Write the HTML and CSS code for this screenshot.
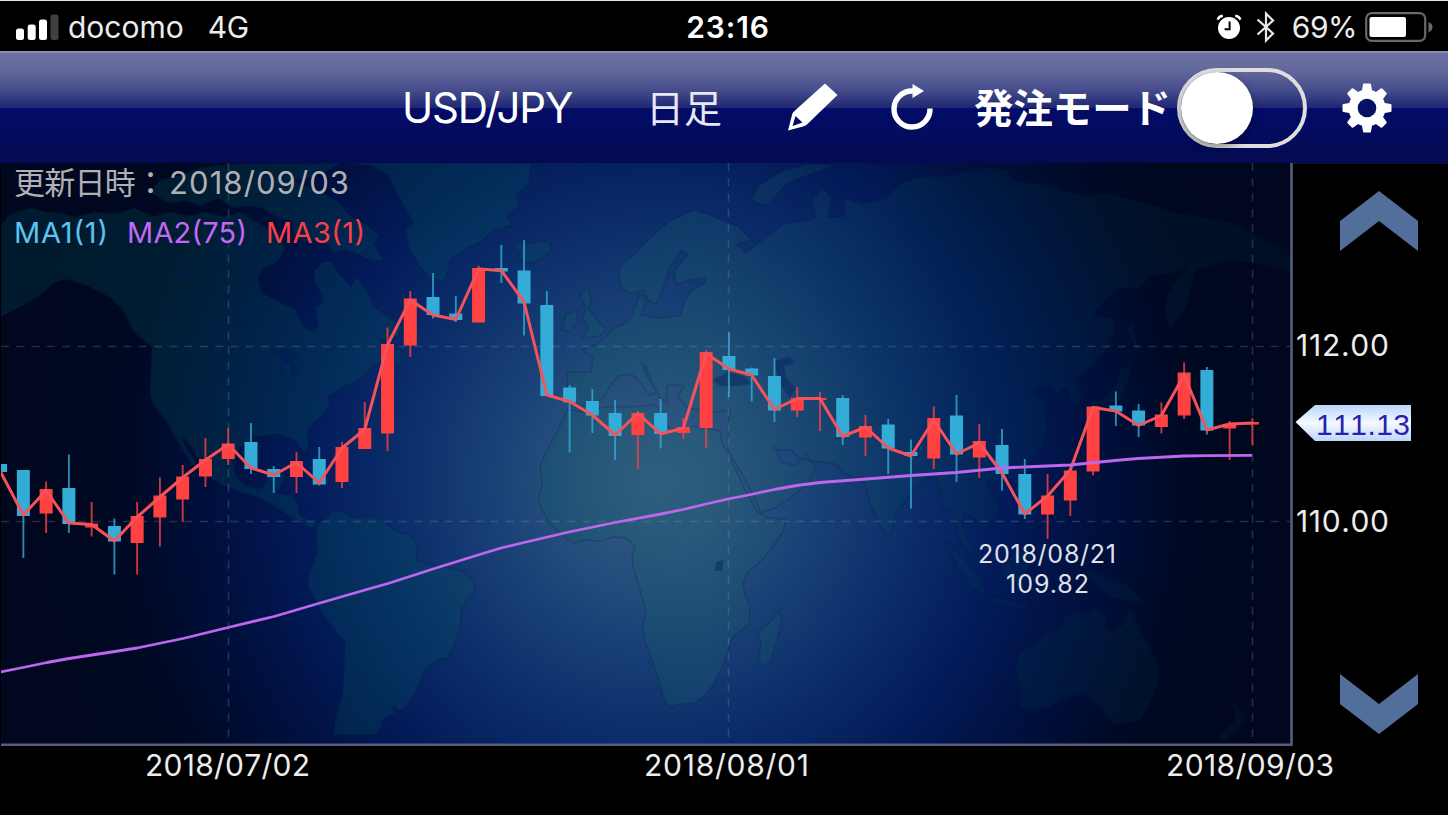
FILE: index.html
```html
<!DOCTYPE html>
<html lang="ja">
<head>
    <meta charset="UTF-8">
    <meta name="viewport" content="width=device-width, initial-scale=1.0">
    <title>USD/JPY チャート</title>
    <link rel="stylesheet" href="styles.css">
</head>
<body>
    <div class="screen">
        <!-- Status bar -->
        <div class="status-bar">
            <div class="status-left">
                <svg class="signal" width="44" height="28" viewBox="0 0 44 28">
                    <rect x="0" y="15.5" width="8" height="11.5" rx="2.5" fill="#fff"/>
                    <rect x="11.7" y="11.5" width="8" height="15.5" rx="2.5" fill="#fff"/>
                    <rect x="23" y="6.5" width="8" height="20.5" rx="2.5" fill="#fff"/>
                    <rect x="34.5" y="1.5" width="8" height="25.5" rx="2.5" fill="#404040"/>
                </svg>
                <span class="carrier">docomo</span>
                <span class="network">4G</span>
            </div>
            <div class="status-time">23:16</div>
            <div class="status-right">
                <svg class="alarm" width="26" height="26" viewBox="0 0 26 26">
                    <circle cx="13" cy="14" r="11" fill="#fff"/>
                    <path d="M1.6 5.6Q3 2.2 6.8 1.8M24.4 5.6Q23 2.2 19.2 1.8" fill="none" stroke="#fff" stroke-width="2.4"/>
                    <path d="M13.6 7.5V15.2H8.6" fill="none" stroke="#000" stroke-width="2"/>
                </svg>
                <svg class="bluetooth" width="20" height="32" viewBox="0 0 20 32">
                    <path d="M1.5 8.5L17 22.5 10 29.5V2.5L17 9.5 1.5 23.5" fill="none" stroke="#e8e8e8" stroke-width="2.2"/>
                </svg>
                <span class="battery-text">69%</span>
                <svg class="battery" width="68" height="30" viewBox="0 0 68 30">
                    <rect x="1.2" y="1.2" width="59" height="27.6" rx="5.5" fill="none" stroke="#696969" stroke-width="2.2"/>
                    <rect x="4.5" y="5" width="36.5" height="20" rx="2" fill="#fff"/>
                    <path d="M63.5 10Q67.5 11.5 67.5 15T63.5 20.5Z" fill="#696969"/>
                </svg>
            </div>
        </div>

        <!-- Toolbar -->
        <div class="toolbar">
            <div class="pair">USD/JPY</div>
            <div class="period">日足</div>
            <svg class="icon-pencil" width="52" height="50" viewBox="0 0 52 50">
                <path fill="#fff" fill-rule="evenodd" d="M38 .5L50.500 12 21 40.500Q19.500 42.500 16 43.500L1 47.500 5 32Q5.500 29.500 8 27.500ZM8.500 33L15.500 39.500 5.500 43Z"/>
            </svg>
            <svg class="icon-reload" width="44" height="48" viewBox="0 0 44 48">
                <path d="M39 24.500A18 18 0 1 1 22 7" fill="none" stroke="#fff" stroke-width="5.400"/>
                <path d="M21.500 0L33 7 21.500 14Z" fill="#fff"/>
            </svg>
            <div class="order-label">発注モード</div>
            <div class="toggle"><div class="knob"></div></div>
            <svg class="icon-gear" width="50" height="50" viewBox="-25 -25 50 50">
                <g fill="#fff">
                    <path id="tooth" d="M-4 -23.500Q-4 -24.500 -3 -24.500H3Q4 -24.500 4 -23.500L5.500 -15H-5.500Z"/>
                    <use href="#tooth" transform="rotate(45)"/>
                    <use href="#tooth" transform="rotate(90)"/>
                    <use href="#tooth" transform="rotate(135)"/>
                    <use href="#tooth" transform="rotate(180)"/>
                    <use href="#tooth" transform="rotate(225)"/>
                    <use href="#tooth" transform="rotate(270)"/>
                    <use href="#tooth" transform="rotate(315)"/>
                    <circle r="18.500"/>
                </g>
                <circle r="9.300" fill="#081063"/>
            </svg>
        </div>

        <!-- Chart -->
        <div class="chart-area">
            <svg class="chart" width="1448" height="652" viewBox="0 163 1448 652">
                <defs>
                    <radialGradient id="sea" gradientUnits="userSpaceOnUse" cx="655" cy="480" r="640">
                        <stop offset="0" stop-color="#365e85"/>
                        <stop offset=".12" stop-color="#2a527f"/>
                        <stop offset=".28" stop-color="#173e74"/>
                        <stop offset=".42" stop-color="#0a2b68"/>
                        <stop offset=".56" stop-color="#021a57"/>
                        <stop offset=".7" stop-color="#000f3c"/>
                        <stop offset=".84" stop-color="#000923"/>
                        <stop offset="1" stop-color="#00071e"/>
                    </radialGradient>
                    <linearGradient id="ground" gradientUnits="userSpaceOnUse" x1="0" y1="0" x2="1290" y2="0">
                        <stop offset="0" stop-color="#00525a" stop-opacity=".26"/>
                        <stop offset=".4" stop-color="#005a5a" stop-opacity=".24"/>
                        <stop offset=".55" stop-color="#206a6a" stop-opacity=".22"/>
                        <stop offset=".75" stop-color="#004050" stop-opacity=".18"/>
                        <stop offset="1" stop-color="#003540" stop-opacity=".16"/>
                    </linearGradient>
                    <linearGradient id="tag" x1="0" y1="0" x2="0" y2="1">
                        <stop offset="0" stop-color="#b9d6fb"/>
                        <stop offset=".5" stop-color="#f6f9ff"/>
                        <stop offset="1" stop-color="#b9d6fb"/>
                    </linearGradient>
                    <clipPath id="plot"><rect x="1" y="163" width="1290" height="581"/></clipPath>
                </defs>

                <g clip-path="url(#plot)">
                    <rect x="1" y="163" width="1290" height="581" fill="url(#sea)"/>
                    <g class="land" fill="url(#ground)">
                        <path d="M0 228L8 216 18 211 32 208 46 212 60 213 76 217 95 212 115 214 135 208 152 217 170 212 190 216 205 212 225 217 240 212 262 225 280 236 285 250 277 262 262 270 258 278 261 292 275 300 295 309 300 320 305 328 314 331 318 326 316 312 314 309 323 302 321 294 314 280 314 271 322 262 332 261 338 272 351 286 357 276 369 294 373 306 383 313 396 322 402 328 398 336 380 340 388 347 400 350 402 363 388 368 380 362 369 370 355 382 345 386 328 397 330 404 325 413 309 428 307 436 309 446 305 452 298 445 295 440 277 434 258 437 240 447 233 462 236 476 245 485 258 489 263 487 268 476 286 476 280 488 277 493 295 497 298 506 300 516 318 523 312 528 295 520 277 508 258 497 240 492 222 485 206 474 198 458 185 438 182 440 194 460 200 471 190 462 180 445 168 424 152 402 150 390 152 347 134 332 124 312 111 298 88 286 65 279 52 284 42 294 22 306 0 317Z"/>
                        <path d="M150 192L160 180 178 176 200 168 230 164 340 163 325 172 308 178 290 180 322 192 340 203 351 217 366 224 379 236 374 244 383 260 372 262 360 255 346 250 334 252 323 240 305 242 295 236 292 222 277 217 262 208 249 206 232 208 218 198 200 206 184 200 170 204Z"/>
                        <path d="M346 163L372 166 388 175 394 188 406 210 413 222 406 229 408 246 420 267 430 278 443 282 448 272 450 260 464 250 480 242 494 230 512 225 506 216 520 206 516 196 529 183 531 163Z"/>
                        <path d="M512 246L519 241 530 244 549 240 551 250 542 258 531 263 518 259 521 252Z"/>
                        <path d="M318 523L326 518 332 511 342 512 355 518 372 516 383 521 396 532 411 535 418 546 416 560 434 566 450 568 462 571 474 580 475 590 468 600 462 608 460 625 457 638 448 657 436 660 425 669 420 682 416 692 408 704 402 711 392 706 395 714 383 719 381 728 374 735 333 735 336 715 342 696 344 670 345 642 334 630 323 615 314 598 307 585 310 572 318 550 316 535Z"/>
                        <path d="M568 409L582 412 605 407 630 407 655 405 660 410 658 420 668 427 684 432 692 426 706 429 720 431 722 443 734 466 744 488 757 512 768 518 786 519 784 530 775 544 762 560 747 573 743 584 745 594 750 608 749 624 733 636 728 650 722 668 711 688 702 698 693 703 680 704 670 707 664 700 660 684 652 660 644 638 643 624 646 612 640 590 633 566 632 556 635 546 626 538 614 537 600 541 586 540 573 543 562 535 549 523 542 510 538 500 542 484 540 466 548 448 559 428Z"/>
                        <path d="M779 611L782 622 774 650 770 663 763 666 758 660 761 645 758 632 768 624Z"/>
                        <path d="M568 393L567 372 591 372 593 358 582 350 596 344 606 336 614 328 628 322 634 310 640 294 646 300 641 315 656 318 680 316 684 302 692 290 704 284 706 278 690 280 676 284 674 272 688 254 682 250 670 266 664 286 656 304 648 300 644 290 630 294 620 286 619 267 632 256 648 240 660 229 672 220 693 210 710 215 726 222 738 226 752 240 736 244 746 252 766 238 784 223 800 222 816 218 812 200 822 188 832 198 828 218 844 216 844 198 862 204 886 198 900 184 918 177 950 176 983 168 1006 170 1015 182 1047 185 1080 196 1110 194 1140 202 1180 214 1232 223 1260 238 1291 252V272L1262 264 1232 260 1208 266 1195 269 1190 290 1186 306 1178 320 1170 331 1165 312 1168 294 1180 276 1190 266 1170 274 1150 276 1140 288 1116 289 1102 304 1093 315 1112 318 1116 327 1113 338 1107 348 1098 360 1089 369 1080 376 1075 381 1082 394 1079 406 1071 402 1066 388 1056 394 1048 386 1033 390 1040 398 1052 402 1043 410 1048 428 1043 444 1032 462 1020 477 1002 482 987 482 990 492 1000 505 996 518 983 527 976 520 964 513 962 524 968 542 978 558 970 556 960 540 954 520 944 508 940 490 936 477 926 478 918 486 906 500 895 515 892 532 887 536 881 527 872 508 866 488 862 477 852 478 844 473 836 464 812 461 800 458 790 450 779 450 774 446 782 462 795 466 806 454 816 467 807 484 790 498 775 508 761 513 755 498 742 474 728 450 728 427 730 410 716 412 700 410 688 408 678 396 684 386 668 384 666 396 668 404 660 398 650 378 646 366 642 364 648 378 656 392 650 396 640 382 632 374 618 376 610 386 604 398 594 404 580 406Z"/>
                        <path d="M580 294L588 288 592 300 588 308 598 320 606 330 600 336 582 338 588 328 582 318 586 310ZM566 314L576 310 578 322 570 332 562 330Z"/>
                        <path d="M752 200L758 186 780 172 808 164 838 165 810 174 786 184 776 196 766 206Z"/>
                        <path d="M1128 363L1136 350 1128 330 1132 324 1138 348ZM1118 402L1106 404 1094 410 1086 416 1090 404 1106 396 1118 384 1120 370 1130 364 1128 382Z"/>
                        <path d="M1015 665L1020 653 1034 644 1047 632 1060 628 1066 616 1075 611 1088 614 1092 608 1107 615 1104 624 1112 632 1122 626 1130 607 1136 620 1142 634 1149 645 1158 668 1158 682 1150 702 1140 720 1128 722 1116 724 1108 718 1102 708 1093 699 1080 694 1066 699 1048 708 1032 710 1020 707 1020 690Z"/>
                        <path d="M945 540L962 556 980 578 986 594 972 588 958 568ZM1000 566L1016 552 1030 546 1030 566 1020 582 1006 582ZM984 596L1012 600 1030 606 1020 609 990 602ZM1086 570L1104 576 1128 586 1146 604 1128 600 1112 598 1096 586Z"/>
                        <path d="M1232 700L1240 710 1248 716 1240 728 1226 740 1218 738 1236 720Z"/>
                    </g>
                    <!-- lakes and inland seas -->
                    <g class="lake">
                        <path d="M178 274L188 270 200 266 196 274 184 276ZM242 318L248 328 250 336 244 328ZM270 350L284 348 296 354 300 360 294 362 300 372 292 376 290 364 282 366 284 380 280 376 282 360Z"/>
                        <path d="M712 380L728 372 744 376 752 384 736 386 720 386ZM774 362L790 356 794 364 784 366 786 378 796 388 790 398 780 384ZM716 562L724 560 722 571 715 571Z"/>
                    </g>

                    <g class="grid-lines">
                        <path d="M1 346.500H1291M1 521.500H1291"/>
                        <path d="M228.500 163V744M728.500 163V744M1252.500 163V744"/>
                    </g>

                    <g id="candles"></g>
                    <polyline id="ma3" class="ma ma-red"/>
                    <polyline class="ma ma-purple" points="0,672 23,667.500 47,662.500 69,658.500 115,651.500 137,648 183,638.500 228,627.500 274,616.500 320,603 365,590 388,583.500 433,569 478,555 501,548 524,542.500 569,532 615,522.500 661,514 683,509.500 706,504 728,499 751,494.500 774,489.500 797,485.500 820,482.500 866,479 911,475.500 956,472.500 1002,468 1024,467 1070,465 1115,460.500 1138,458.500 1184,456 1207,455.700 1252,455.300"/>
                </g>

                <path class="frame" d="M1291.500 163V744.800H1"/>

                <g class="legend">
                    <text class="updated" x="14" y="194" textLength="152">更新日時：</text>
                    <text class="updated" x="169" y="194" textLength="180">2018/09/03</text>
                    <text x="14" y="243" fill="#5cc4f0" textLength="94">MA1(1)</text>
                    <text x="127" y="243" fill="#c268f4" textLength="120">MA2(75)</text>
                    <text x="266" y="243" fill="#fa4044" textLength="99">MA3(1)</text>
                </g>

                <g class="low-label">
                    <text x="978" y="563" textLength="138">2018/08/21</text>
                    <text x="1006" y="593" textLength="83">109.82</text>
                </g>

                <g class="axis">
                    <text x="1296" y="356" textLength="93">112.00</text>
                    <text x="1296" y="531.500" textLength="93">110.00</text>
                    <text x="145" y="776" textLength="165">2018/07/02</text>
                    <text x="644" y="776" textLength="165">2018/08/01</text>
                    <text x="1166" y="776" textLength="168">2018/09/03</text>
                </g>

                <path d="M1295.500 422L1315 405H1411V441H1315Z" fill="url(#tag)"/>
                <text class="last-price" x="1316" y="434.500" textLength="94">111.13</text>
            </svg>

            <div class="scroll-buttons">
                <svg width="78" height="60" viewBox="0 0 78 60"><path d="M39 0L78 30V60L39 30 0 60V30Z" fill="#526f9b"/></svg>
                <svg width="78" height="60" viewBox="0 0 78 60"><path d="M39 60L78 30V0L39 30 0 0V30Z" fill="#526f9b"/></svg>
            </div>
        </div>
    </div>

    <script src="chart.js"></script>
</body>
</html>
```

FILE: styles.css
```css
body {
    margin: 0;
    background: #000;
    color: #fff;
    font-family: Inter, "Noto Sans CJK JP", sans-serif;
    overflow: hidden;
}

.screen {
    width: 1448px;
    height: 815px;
    box-sizing: border-box;
    border-top: 1px solid #e4ebe6;
    display: flex;
    flex-direction: column;
}

/* Status bar */
.status-bar {
    height: 50px;
    padding-top: 1px;
    box-sizing: border-box;
    display: grid;
    grid-template-columns: 1fr 92px 1fr;
    align-items: center;
    font-size: 30px;
    color: #ececec;
}

.status-left,
.status-right {
    display: flex;
    align-items: center;
}

.status-left {
    padding-left: 16px;
}

.signal {
    margin-right: 8px;
}

.network {
    margin-left: 24px;
    letter-spacing: -0.5px;
}

.status-time {
    padding-left: 8px;
    text-align: center;
    font-weight: 600;
    letter-spacing: 0.9px;
    white-space: nowrap;
    color: #fff;
}

.status-right {
    justify-content: flex-end;
    padding-right: 15px;
}

.bluetooth {
    margin: 0 16px 0 14px;
}

.battery-text {
    letter-spacing: -0.5px;
}

.battery {
    margin-left: 8px;
}

/* Toolbar */
.toolbar {
    height: 113px;
    box-sizing: border-box;
    border-top: 2px solid #8c8bb8;
    border-bottom: 1px solid #0a0d30;
    background: linear-gradient(#6b70a4 0, #656a9e 14%, #454c8b 34%, #1e2672 50%, #020c68 50.5%, #040b52 100%);
    display: flex;
    align-items: center;
    padding-left: 402px;
    padding-bottom: 1px;
    white-space: nowrap;
}

.pair {
    width: 244px;
    font-size: 42px;
    font-weight: 400;
    letter-spacing: -1.2px;
}

.period {
    width: 141px;
    font-size: 38px;
    font-weight: 400;
    color: #e6e8f4;
}

.period,
.order-label {
    font-family: "Noto Sans CJK JP", sans-serif;
    line-height: 1;
    padding-bottom: 3px;
}

.icon-reload {
    margin-left: 52px;
}

.order-label {
    width: 203px;
    margin-left: 39px;
    font-size: 39.4px;
    font-weight: 600;
}

.toggle {
    width: 130px;
    height: 80px;
    flex: none;
    box-sizing: border-box;
    border: 4px solid #dedede;
    border-radius: 40px;
}

.knob {
    width: 72px;
    height: 72px;
    border-radius: 50%;
    background: #fff;
    box-shadow: 0 4px 8px rgba(0, 0, 0, 0.35);
}

.icon-gear {
    margin-left: 35px;
}

/* Chart */
.chart-area {
    display: grid;
    height: 651px;
}

.chart,
.scroll-buttons {
    grid-area: 1 / 1;
}

.chart {
    margin-top: -1px;
}

.scroll-buttons {
    justify-self: end;
    display: flex;
    flex-direction: column;
    justify-content: space-between;
    padding: 27px 30px 81px 0;
}

.land {
    stroke: rgba(0, 20, 60, 0.2);
    stroke-width: 1.5;
}

.lake {
    fill: rgba(0, 20, 90, 0.35);
}

.grid-lines {
    fill: none;
    stroke: rgba(150, 165, 190, 0.24);
    stroke-width: 1.6;
    stroke-dasharray: 8 7.3;
}

.up {
    fill: #ff4142;
    stroke: #ff4142;
}

.down {
    fill: #33acd8;
    stroke: #33acd8;
}

.wick {
    stroke-width: 1.9;
    opacity: 0.8;
}

.candle-body {
    stroke: none;
}

.ma {
    fill: none;
    stroke-width: 3;
    stroke-linejoin: round;
}

.ma-red {
    stroke: #f6525a;
}

.ma-purple {
    stroke: #bd66ee;
    stroke-width: 2.8;
}

.frame {
    fill: none;
    stroke: #555d78;
    stroke-width: 2.6;
}

.legend {
    font-size: 29px;
}

.updated {
    font-size: 31px;
    fill: #b0b0b2;
}

.low-label {
    font-size: 25px;
    fill: #dfe2ea;
}

.axis {
    font-size: 30px;
    font-kerning: none;
    fill: #ececec;
}

.last-price {
    font-family: "Liberation Sans", sans-serif;
    font-size: 30px;
    font-kerning: none;
    fill: #2a1fae;
}
```

FILE: chart.js
```js
// [direction, high, body top, body bottom, low, close]
const candles = [
    ['down', 464, 464, 472, 472, 472],
    ['down', 470, 470, 516, 558, 515],
    ['up', 481.5, 489, 513.5, 533, 490.5],
    ['down', 454.5, 488, 524, 533, 523],
    ['up', 502, 523.5, 527.5, 536.5, 524.5],
    ['down', 518.5, 526, 541.5, 574.5, 541],
    ['up', 502, 516, 543, 574.5, 517],
    ['up', 477.5, 495.5, 517.5, 546.5, 497],
    ['up', 465, 476.5, 499.5, 522, 477.5],
    ['up', 438, 459, 476.5, 487, 460],
    ['up', 428, 443.5, 459, 465, 444.5],
    ['down', 423, 442, 469, 474, 468],
    ['down', 466, 469, 477, 493, 475],
    ['up', 452, 461, 477, 493, 462.5],
    ['down', 447, 459, 484.5, 485.5, 483],
    ['up', 442, 447, 482, 488, 448],
    ['up', 402, 428, 449, 449, 429.5],
    ['up', 327.5, 344, 433.5, 451, 345],
    ['up', 291, 298.5, 345.5, 357, 300],
    ['down', 273, 297, 315, 318.5, 315],
    ['down', 296, 313.5, 320, 322, 319.5],
    ['up', 265.5, 268, 322.5, 322.5, 269],
    ['down', 245, 268, 271.5, 283, 270.5],
    ['down', 240, 270.5, 303.5, 335.5, 302],
    ['down', 291, 305, 396, 396, 395],
    ['down', 385, 387.5, 402.5, 452.5, 401.5],
    ['down', 389, 401, 415.5, 433, 415],
    ['down', 400, 413, 436, 460, 435],
    ['up', 411, 413, 435, 469, 413.5],
    ['down', 399, 413, 434, 448.5, 434],
    ['up', 418, 427, 433, 439, 428],
    ['up', 350, 352, 428, 448.5, 353.5],
    ['down', 332.5, 356, 370, 397, 369],
    ['down', 367.5, 368.5, 375.5, 401.5, 375],
    ['down', 358, 376, 410.5, 422, 409.5],
    ['up', 387, 398, 410.5, 417, 398.5],
    ['up', 392, 398, 400, 431, 398.5],
    ['down', 395, 398, 437, 445, 436.5],
    ['up', 415, 426, 437.5, 456, 427],
    ['down', 419, 424.5, 448.5, 474, 448],
    ['down', 439.5, 452, 456, 508.5, 456],
    ['up', 406.5, 418, 458.5, 469, 420],
    ['down', 395, 415.5, 454.5, 482, 454],
    ['up', 424, 441, 457.5, 478, 443],
    ['down', 429, 445, 474, 490.5, 473],
    ['down', 459, 474, 514.5, 519, 514],
    ['up', 474, 495.5, 514.5, 539, 496],
    ['up', 469, 470.5, 500.5, 516, 470],
    ['up', 406, 406.5, 471.5, 475.5, 407.5],
    ['down', 391.5, 405.5, 411.5, 426, 411],
    ['down', 404, 410.5, 425.5, 437, 425.5],
    ['up', 402.5, 414.5, 427, 433.5, 415.5],
    ['up', 362.5, 372.5, 415.5, 419, 375],
    ['down', 367, 370, 430.5, 434.5, 430],
    ['up', 421, 424, 428.5, 460, 424],
    ['up', 418, 422, 424.5, 445, 423]
];

const SVG_NS = 'http://www.w3.org/2000/svg';
const STEP = 22.76;
const BODY_WIDTH = 13;

const layer = document.getElementById('candles');
const points = [];

candles.forEach(([dir, high, top, bottom, low, close], i) => {
    const x = 0.6 + i * STEP;

    const wick = document.createElementNS(SVG_NS, 'path');
    wick.setAttribute('class', 'wick ' + dir);
    wick.setAttribute('d', `M${x} ${high}V${low}`);
    layer.appendChild(wick);

    const body = document.createElementNS(SVG_NS, 'rect');
    body.setAttribute('class', dir + ' candle-body');
    body.setAttribute('x', x - BODY_WIDTH / 2);
    body.setAttribute('y', top);
    body.setAttribute('width', BODY_WIDTH);
    body.setAttribute('height', bottom - top);
    layer.appendChild(body);

    points.push(`${x},${close}`);
});

document.getElementById('ma3').setAttribute('points', points.join(' '));
```
